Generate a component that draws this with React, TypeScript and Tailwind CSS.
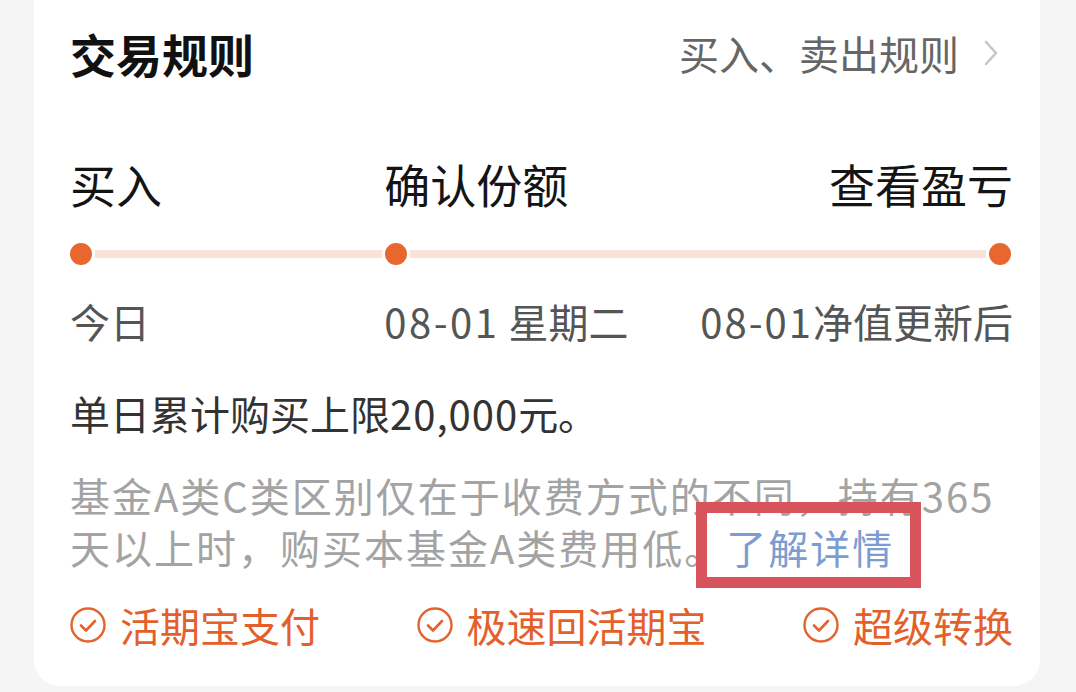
import React from 'react'

const font = { fontFamily: '"Noto Sans CJK SC", "Noto Sans", sans-serif' }

function CheckCircle() {
  return (
    <svg width="36" height="36" viewBox="0 0 36 36" fill="none" className="shrink-0">
      <circle cx="18" cy="18" r="16.5" stroke="#e4622c" strokeWidth="2.4" />
      <path d="M11 18.5 L16 23.5 L25 14" stroke="#e4622c" strokeWidth="2.6" strokeLinecap="round" strokeLinejoin="round" />
    </svg>
  )
}

function Chevron() {
  return (
    <svg width="16" height="28" viewBox="0 0 16 28" fill="none">
      <path d="M3 3 L13 14 L3 25" stroke="#c6c6c6" strokeWidth="2.6" strokeLinecap="round" strokeLinejoin="round" />
    </svg>
  )
}

function Dot() {
  return <div className="relative z-10 w-[28px] h-[28px] rounded-full bg-[#e8672e] border-[3px] border-white" />
}

export default function App() {
  const features = ['活期宝支付', '极速回活期宝', '超级转换']

  return (
    <div className="w-[1076px] h-[692px] bg-[#f5f5f5] overflow-hidden" style={font}>
      <div className="ml-[34px] w-[1006px] h-[686px] bg-white rounded-b-[26px] pl-[36px] pr-[27px]">
        {/* header */}
        <div className="h-[106px] flex items-center justify-between">
          <h2 className="text-[46px] font-bold text-[#111] leading-none">交易规则</h2>
          <div className="flex items-center gap-[24px] pr-[14px]">
            <span className="text-[40px] text-[#666] leading-none">买入、卖出规则</span>
            <Chevron />
          </div>
        </div>

        {/* steps */}
        <div className="mt-[52px] grid grid-cols-3 text-[46px] leading-[50px] font-normal text-[#141414]">
          <div>买入</div>
          <div>确认份额</div>
          <div className="text-right">查看盈亏</div>
        </div>

        <div className="mt-[32px] relative h-[28px] grid grid-cols-3 items-center">
          <div className="absolute left-[14px] right-[14px] top-[10px] h-[8px] bg-[#fbe2d8]" />
          <div className="flex -ml-[3px]"><Dot /></div>
          <div className="flex -ml-[2px]"><Dot /></div>
          <div className="flex justify-end -mr-[1px]"><Dot /></div>
        </div>

        <div className="mt-[28px] grid grid-cols-3 text-[40px] leading-[50px] text-[#555]">
          <div>今日</div>
          <div><span className="tracking-[2.5px]">08-01</span> 星期二</div>
          <div className="text-right whitespace-nowrap"><span className="tracking-[2px]">08-01</span>净值更新后</div>
        </div>

        <p className="mt-[42px] text-[40px] leading-[50px] text-[#333]">
          单日累计购买上限<span className="tracking-[1px]">20,000</span>元。
        </p>

        <p className="mt-[31px] text-[40px] leading-[52px] tracking-[2px] text-[#a3a3a3] whitespace-nowrap">
          基金A类C类区别仅在于收费方式的不同，持有365
          <br />
          天以上时，购买本基金A类费用低。
          <span className="relative text-[#7d9ccf]">
            了解详情
            <span className="absolute -left-[30px] -right-[27px] -top-[16px] -bottom-[12px] border-[11px] border-[#d8545c]" />
          </span>
        </p>

        <div className="mt-[27px] flex justify-between">
          {features.map(f => (
            <div key={f} className="flex items-center gap-[14px]">
              <CheckCircle />
              <span className="text-[40px] leading-[50px] text-[#e4602b]">{f}</span>
            </div>
          ))}
        </div>
      </div>
    </div>
  )
}
